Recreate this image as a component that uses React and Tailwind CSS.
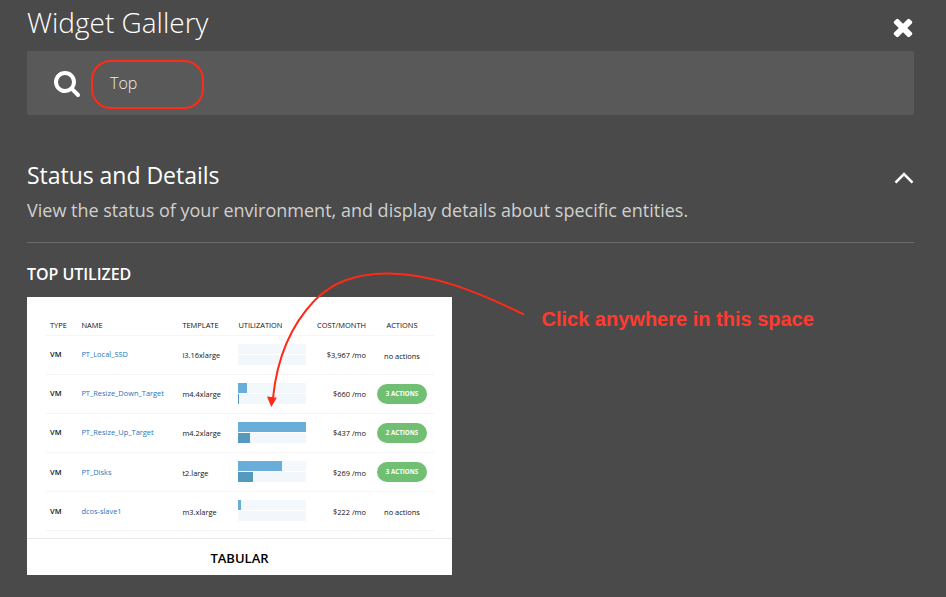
const rows = [
  { name: 'PT_Local_SSD', template: 'i3.16xlarge', bars: [0, 0], cost: '$3,967 /mo', actions: 0 },
  { name: 'PT_Resize_Down_Target', template: 'm4.4xlarge', bars: [12.5, 1.5], cost: '$660 /mo', actions: 3 },
  { name: 'PT_Resize_Up_Target', template: 'm4.2xlarge', bars: [100, 17], cost: '$437 /mo', actions: 2 },
  { name: 'PT_Disks', template: 't2.large', bars: [64.5, 21], cost: '$269 /mo', actions: 3 },
  { name: 'dcos-slave1', template: 'm3.xlarge', bars: [4.5, 0], cost: '$222 /mo', actions: 0 },
];

const columns = 'grid grid-cols-[31.4px_101px_56px_67.600px_60px_72px] items-center pl-[4px]';

function SearchIcon() {
  return (
    <svg className="size-7 shrink-0" viewBox="0 0 1792 1792" fill="currentColor">
      <path d="M1216 832q0-185-131.5-316.5t-316.5-131.5-316.5 131.5-131.5 316.5 131.5 316.5 316.5 131.5 316.5-131.5 131.5-316.5zm512 832q0 52-38 90t-90 38q-54 0-90-38l-343-342q-179 124-399 124-143 0-273.5-55.5t-225-150-150-225-55.5-273.5 55.5-273.5 150-225 225-150 273.5-55.5 273.5 55.5 225 150 150 225 55.5 273.5q0 220-124 399l343 343q37 37 37 90z" />
    </svg>
  );
}

function CloseIcon() {
  return (
    <svg className="size-7" viewBox="0 0 1792 1792" fill="currentColor">
      <path d="M1490 1322q0 40-28 68l-136 136q-28 28-68 28t-68-28l-294-294-294 294q-28 28-68 28t-68-28l-136-136q-28-28-28-68t28-68l294-294-294-294q-28-28-28-68t28-68l136-136q28-28 68-28t68 28l294 294 294-294q28-28 68-28t68 28l136 136q28 28 28 68t-28 68l-294 294 294 294q28 28 28 68z" />
    </svg>
  );
}

function Bars({ values }) {
  return (
    <div className="-mt-px flex flex-col gap-px">
      <div className="h-[10px] bg-[#f3f8fc]">
        <div className="h-full bg-[#68aed8]" style={{ width: `${values[0]}%` }} />
      </div>
      <div className="h-[10px] bg-[#f2f7fb]">
        <div className="h-full bg-[#5599bd]" style={{ width: `${values[1]}%` }} />
      </div>
    </div>
  );
}

function UtilizationCard() {
  return (
    <div className="flex h-[278px] w-[425px] flex-col bg-white text-[#111]">
      <div className="h-[241px] pt-[17px] pr-[18px] pl-[19px] text-[7.450px] leading-[10px] font-medium">
        <div className={`${columns} h-[21.5px] border-b border-[#f4f4f4] pt-[2px] font-normal`}>
          <span>TYPE</span>
          <span>NAME</span>
          <span>TEMPLATE</span>
          <span>UTILIZATION</span>
          <span className="text-right">COST/MONTH</span>
          <span className="text-center">ACTIONS</span>
        </div>
        {rows.map((row) => (
          <div key={row.name} className={`${columns} h-[39.2px] border-b border-[#f4f4f4]`}>
            <span className="pb-[1px] font-semibold">VM</span>
            <span className="pb-[1px] text-[#2676bd]">{row.name}</span>
            <span className="pt-[1px]">{row.template}</span>
            <Bars values={row.bars} />
            <span className="pt-[1px] text-right">{row.cost}</span>
            {row.actions ? (
              <span className="mx-auto flex h-5 w-[50px] items-center justify-center rounded-full bg-[#70bf73] text-[6.200px] font-bold text-white">
                {row.actions} ACTIONS
              </span>
            ) : (
              <span className="pt-[2px] text-center">no actions</span>
            )}
          </div>
        ))}
      </div>
      <div className="flex flex-1 items-center justify-center border-t border-[#e8e8e8] pt-[4px] text-[13px] font-semibold text-black">
        TABULAR
      </div>
    </div>
  );
}

export default function App() {
  return (
    <div className="relative h-[597px] w-[946px] overflow-hidden bg-[#4a4a4a] pr-8 pl-[27px] font-['Open_Sans',sans-serif] text-white">
      <header className="flex h-[51px] items-start justify-between">
        <h1 className="text-[28px] leading-[44px] font-light">Widget Gallery</h1>
        <button className="-mr-[3px] pt-[13px]"><CloseIcon /></button>
      </header>
      <div className="flex h-16 items-center rounded-[2px] bg-[#595959] pl-[26px]">
        <SearchIcon />
        <div className="mt-[2px] ml-[10px] flex h-[49px] w-[113px] items-center rounded-[20px] border-2 border-[#ff2a17] pb-[3px] pl-[17px] text-[16px] font-light text-[#eee]">
          Top
        </div>
      </div>
      <section className="pt-[44px]">
        <div className="flex items-center justify-between">
          <h2 className="text-[23px] leading-8 tracking-[-0.03px]">Status and Details</h2>
          <svg className="mt-[6px] h-3 w-5" viewBox="0 0 20 12" fill="none" stroke="currentColor" strokeWidth="2.6">
            <path d="M1.5 10.7 10 2.2l8.500 8.500" />
          </svg>
        </div>
        <p className="mt-[4px] border-b border-[#6c6c6c] pb-[17px] text-[18px] leading-[30px] text-[#d0d0d0]">
          View the status of your environment, and display details about specific entities.
        </p>
        <h3 className="mt-[20px] mb-[11px] text-[16px] leading-[23px] font-semibold tracking-[-0.05px]">TOP UTILIZED</h3>
        <UtilizationCard />
      </section>
      <svg className="absolute top-0 left-0" width="946" height="597" fill="none">
        <path d="M524 314.500C474 290 430 273 386 273.500C355 274 333 282 315 300C290 326 277 358 273 398" stroke="#ff2a17" strokeWidth="2" />
        <path d="M267 396.500 276.800 397.700 271.300 407Z" fill="#ff2a17" />
      </svg>
      <p className="absolute top-[307px] left-[541.5px] font-['Liberation_Sans',Arial,sans-serif] text-[20px] leading-6 font-bold whitespace-nowrap text-[#ff3b30]">
        Click anywhere in this space
      </p>
    </div>
  );
}
